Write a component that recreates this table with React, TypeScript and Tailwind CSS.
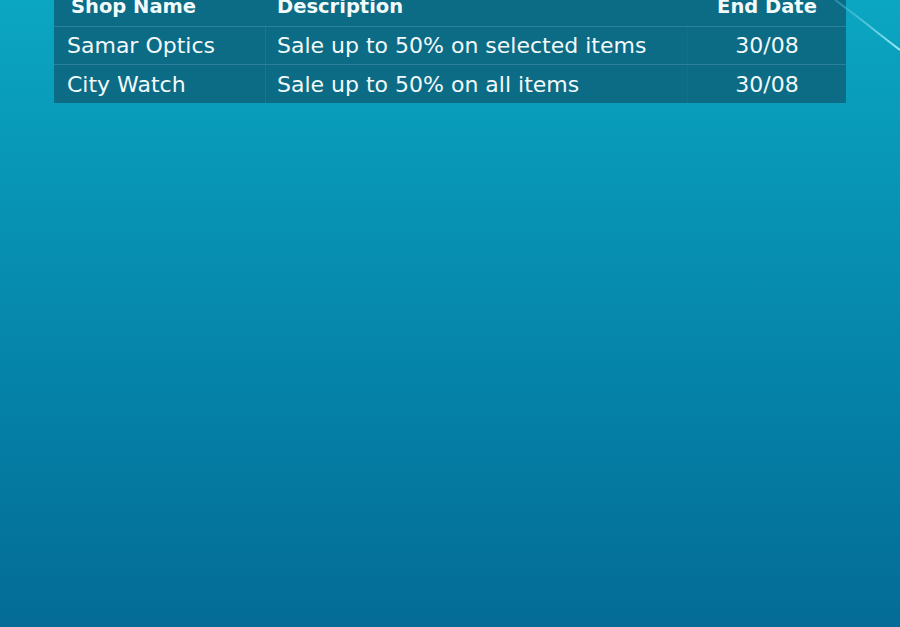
import React from "react";

const rows = [
  { shop: "Samar Optics", desc: "Sale up to 50% on selected items", end: "30/08" },
  { shop: "City Watch", desc: "Sale up to 50% on all items", end: "30/08" },
];

export default function App() {
  return (
    <div
      className="relative w-[900px] h-[627px] overflow-hidden bg-gradient-to-b from-[#0ba6c2] via-[#0689ad] to-[#046c96]"
      style={{ fontFamily: '"DejaVu Sans", sans-serif' }}
    >
      <svg className="absolute right-0 top-0" width="70" height="60" viewBox="0 0 70 60">
        <defs>
          <linearGradient id="g" x1="0" y1="0" x2="1" y2="1">
            <stop offset="0" stopColor="#3ab4cf" stopOpacity="0.5" />
            <stop offset="1" stopColor="#9eeefc" stopOpacity="1" />
          </linearGradient>
        </defs>
        <path d="M5 0 C 22 12, 44 30, 70 50" stroke="url(#g)" strokeWidth="2" fill="none" />
      </svg>
      <div className="mx-[54px] -mt-[12px] bg-[#0c6b85] text-[#f2fafc]">
        <div className="flex h-[39px] items-center border-b border-[#2a8198] font-bold text-[19.5px]">
          <div className="w-[212px] pl-[17px]">Shop Name</div>
          <div className="w-[422px] pl-[11px]">Description</div>
          <div className="flex-1 text-center">End Date</div>
        </div>
        {rows.map((r, i) => (
          <div
            key={r.shop}
            className={`flex h-[38px] items-center text-[22px] ${i === 0 ? "border-b border-[#2a8198]" : ""}`}
          >
            <div className="w-[212px] h-full flex items-center pl-[13px] border-r border-[#1a7590]">{r.shop}</div>
            <div className="w-[422px] h-full flex items-center pl-[11px] border-r border-[#11708a]">{r.desc}</div>
            <div className="flex-1 text-center">{r.end}</div>
          </div>
        ))}
      </div>
    </div>
  );
}
